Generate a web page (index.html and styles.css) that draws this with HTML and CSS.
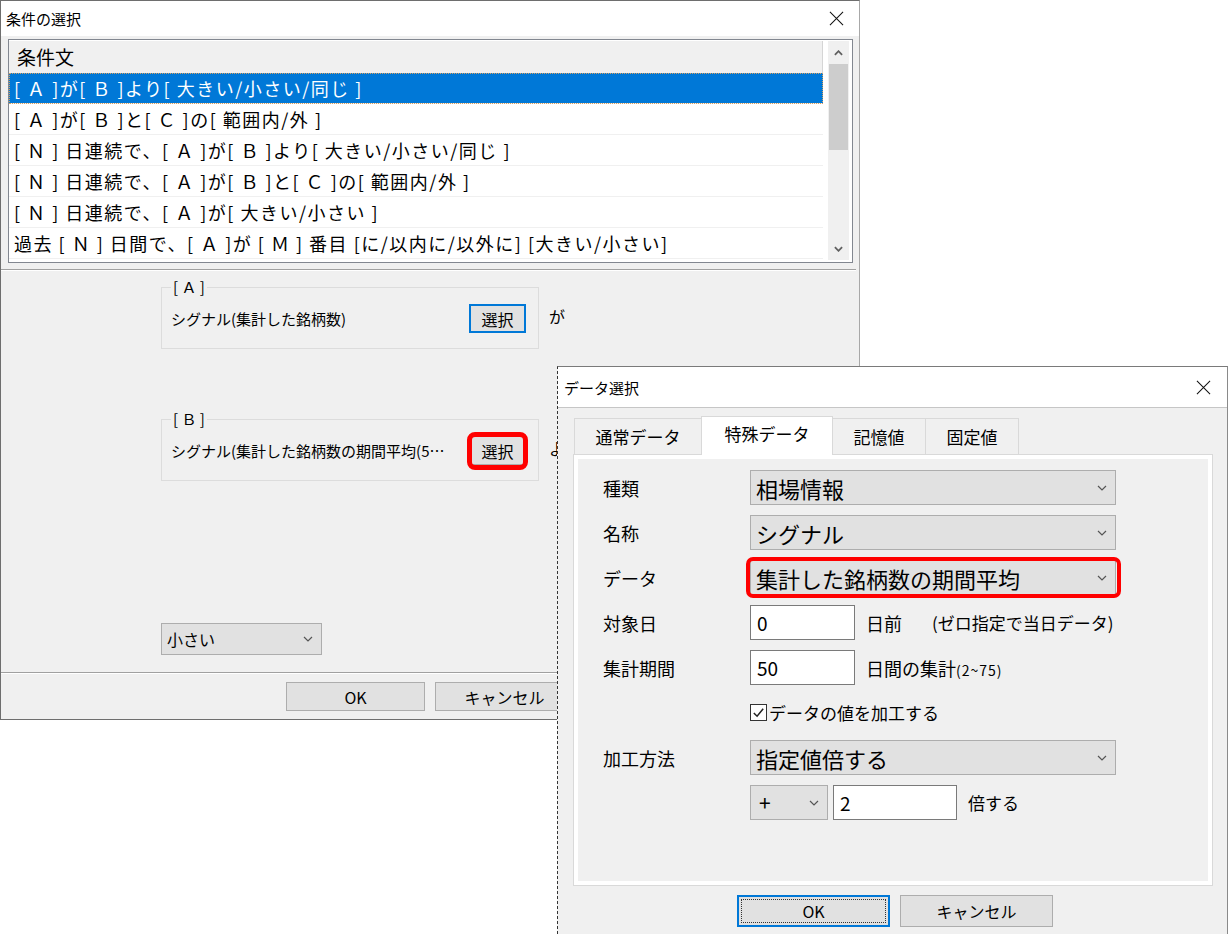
FILE: index.html
```html
<!DOCTYPE html>
<html lang="ja">
<head>
<meta charset="utf-8">
<title>条件の選択</title>
<link rel="stylesheet" href="styles.css">
</head>
<body>
<section class="win win1">
  <header class="tbar tbar1">
    <span class="ttl">条件の選択</span>
    <svg class="close" viewBox="0 0 16 16"><path d="M1 1L15 15M15 1L1 15"/></svg>
  </header>
  <div class="list">
    <div class="list-main">
      <div class="list-head">条件文</div>
      <div class="row sel">[ Ａ ]が[ Ｂ ]より[ 大きい/小さい/同じ ]</div>
      <div class="row">[ Ａ ]が[ Ｂ ]と[ Ｃ ]の[ 範囲内/外 ]</div>
      <div class="row">[ Ｎ ] 日連続で、[ Ａ ]が[ Ｂ ]より[ 大きい/小さい/同じ ]</div>
      <div class="row">[ Ｎ ] 日連続で、[ Ａ ]が[ Ｂ ]と[ Ｃ ]の[ 範囲内/外 ]</div>
      <div class="row">[ Ｎ ] 日連続で、[ Ａ ]が[ 大きい/小さい ]</div>
      <div class="row">過去 [ Ｎ ] 日間で、[ Ａ ]が [ Ｍ ] 番目 [に/以内に/以外に] [大きい/小さい]</div>
    </div>
    <div class="vscroll">
      <div class="sb-btn"><svg viewBox="0 0 10 6"><path d="M1 5L5 1L9 5"/></svg></div>
      <div class="sb-track"><div class="sb-thumb"></div></div>
      <div class="sb-btn"><svg viewBox="0 0 10 6"><path d="M1 1L5 5L9 1"/></svg></div>
    </div>
  </div>
  <div class="sep sep-top"></div>
  <div class="params">
    <div class="grp-row grp-a">
      <fieldset class="grp">
        <legend>[ Ａ ]</legend>
        <div class="grp-in">
          <span class="grp-text">シグナル(集計した銘柄数)</span>
          <button class="btn pick focus">選択</button>
        </div>
      </fieldset>
      <span class="conj">が</span>
    </div>
    <div class="grp-row grp-b">
      <fieldset class="grp">
        <legend>[ Ｂ ]</legend>
        <div class="grp-in">
          <span class="grp-text">シグナル(集計した銘柄数の期間平均(5…</span>
          <span class="mark-wrap"><button class="btn pick">選択</button><span class="ring ring-btn"></span></span>
        </div>
      </fieldset>
      <span class="conj">より</span>
    </div>
    <div class="dd dd-small"><span class="dd-val">小さい</span><svg class="chev" viewBox="0 0 10 6"><path d="M1 1L5 5L9 1"/></svg></div>
  </div>
  <div class="sep sep-bot"></div>
  <div class="btns1">
    <button class="btn b1">OK</button>
    <button class="btn b1">キャンセル</button>
  </div>
</section>

<section class="win win2">
  <header class="tbar tbar2">
    <span class="ttl">データ選択</span>
    <svg class="close" viewBox="0 0 16 16"><path d="M1 1L15 15M15 1L1 15"/></svg>
  </header>
  <div class="tabs">
    <div class="tab t1">通常データ</div>
    <div class="tab t2 on">特殊データ</div>
    <div class="tab t3">記憶値</div>
    <div class="tab t4">固定値</div>
  </div>
  <div class="panel">
    <div class="panel-in">
      <div class="frow">
        <span class="lbl">種類</span>
        <div class="dd dd-big"><span class="dd-val">相場情報</span><svg class="chev" viewBox="0 0 10 6"><path d="M1 1L5 5L9 1"/></svg></div>
      </div>
      <div class="frow">
        <span class="lbl">名称</span>
        <div class="dd dd-big"><span class="dd-val">シグナル</span><svg class="chev" viewBox="0 0 10 6"><path d="M1 1L5 5L9 1"/></svg></div>
      </div>
      <div class="frow">
        <span class="lbl">データ</span>
        <div class="dd dd-big"><span class="dd-val">集計した銘柄数の期間平均</span><svg class="chev" viewBox="0 0 10 6"><path d="M1 1L5 5L9 1"/></svg><span class="ring ring-dd"></span></div>
      </div>
      <div class="frow">
        <span class="lbl">対象日</span>
        <div class="ctl">
          <div class="inp inp-num">0</div>
          <span class="unit">日前</span>
          <span class="note">(ゼロ指定で当日データ)</span>
        </div>
      </div>
      <div class="frow">
        <span class="lbl">集計期間</span>
        <div class="ctl">
          <div class="inp inp-num">50</div>
          <span class="unit">日間の集計<small class="rng">(2~75)</small></span>
        </div>
      </div>
      <div class="frow">
        <span class="lbl"></span>
        <label class="chk">
          <span class="box"><svg viewBox="0 0 16 16"><path d="M3 8.5L6.5 12L13 4"/></svg></span>
          <span class="chk-text">データの値を加工する</span>
        </label>
      </div>
      <div class="frow">
        <span class="lbl">加工方法</span>
        <div class="dd dd-big"><span class="dd-val">指定値倍する</span><svg class="chev" viewBox="0 0 10 6"><path d="M1 1L5 5L9 1"/></svg></div>
      </div>
      <div class="frow">
        <span class="lbl"></span>
        <div class="ctl">
          <div class="dd dd-op"><span class="dd-val">+</span><svg class="chev" viewBox="0 0 10 6"><path d="M1 1L5 5L9 1"/></svg></div>
          <div class="inp inp-mul">2</div>
          <span class="unit unit-mul">倍する</span>
        </div>
      </div>
    </div>
  </div>
  <div class="btns2">
    <button class="btn b2 default">OK</button>
    <button class="btn b2">キャンセル</button>
  </div>
</section>
</body>
</html>
```

FILE: styles.css
```css
* { box-sizing: border-box; }
html, body { margin: 0; padding: 0; }
body {
  width: 1228px;
  height: 934px;
  background: #fff;
  font-family: "Noto Sans CJK JP", "Noto Sans", sans-serif;
  color: #000;
  overflow: hidden;
  position: relative;
}

/* ---------- windows ---------- */
.win {
  position: absolute;
  display: flex;
  flex-direction: column;
  background: #f0f0f0;
}
.win1 {
  left: 0;
  top: 0;
  width: 860px;
  height: 720px;
  border: 1px solid #6e6e6e;
  border-right-color: #a8a8a8;
}
.win2 {
  left: 557px;
  top: 366px;
  width: 671px;
  height: 568px;
  border-top: 1px solid #7a7a7a;
  border-left: 1px dashed #333;
  border-right: 1px solid #8a8a8a;
}

.tbar {
  flex: none;
  background: #fff;
  display: flex;
  align-items: center;
  justify-content: space-between;
}
.tbar1 { height: 35px; padding: 0 15px 0 5px; }
.tbar2 { height: 41px; padding: 0 16px 0 6px; border-bottom: 1px solid #c6c6c6; }
.ttl { font-size: 15px; line-height: 1; }
.close {
  width: 15px;
  height: 15px;
  fill: none;
  stroke: #111;
  stroke-width: 1.1;
}

/* ---------- list ---------- */
.list {
  flex: none;
  margin: 3px 6px 0 7px;
  height: 224px;
  border: 1px solid #828790;
  background: #fff;
  display: flex;
}
.list-main { width: 814px; padding-top: 1px; }
.list-head {
  height: 32px;
  background: #f0f0f0;
  border-right: 1px solid #d5d5d5;
  font-size: 19px;
  line-height: 32px;
  padding-left: 8px;
}
.row {
  height: 31px;
  font-size: 18px;
  line-height: 30px;
  padding-left: 5px;
  letter-spacing: 1.5px;
  border-bottom: 1px solid #f0f0f0;
  white-space: nowrap;
}
.row.sel {
  background: #0078d7;
  color: #fff;
  outline: 1px dotted #d9a05f;
  outline-offset: -1px;
}
.vscroll {
  width: 21px;
  margin: 1px 0 2px 5px;
  background: #f0f0f0;
  display: flex;
  flex-direction: column;
}
.sb-btn {
  height: 23px;
  display: flex;
  align-items: center;
  justify-content: center;
}
.sb-btn svg {
  width: 9px;
  height: 6px;
  fill: none;
  stroke: #606060;
  stroke-width: 2;
}
.sb-track { flex: 1; }
.sb-thumb { height: 86px; margin: 0 1px; background: #cdcdcd; }

/* ---------- separators ---------- */
.sep {
  flex: none;
  height: 2px;
  border-top: 1px solid #a0a0a0;
  border-bottom: 1px solid #fff;
}
.sep-top { margin: 6px 3px 0 0; }
.sep-bot { margin: 17px 0 0 0; }

/* ---------- groups ---------- */
.params {
  flex: none;
  padding-left: 160px;
  display: flex;
  flex-direction: column;
  align-items: flex-start;
}
.grp-row { display: flex; align-items: center; gap: 10px; }
.grp-a { margin-top: 7px; }
.grp-b { margin-top: 61px; }
.grp {
  width: 378px;
  margin: 0;
  min-width: 0;
  border: 1px solid #dcdcdc;
  padding: 8px 12px 15px 9px;
}
.grp legend {
  font-size: 15px;
  line-height: 18px;
  padding: 0 2px;
  margin-left: 0;
}
.grp-in {
  display: flex;
  align-items: center;
  justify-content: space-between;
}
.grp-text { font-size: 15px; line-height: 1; white-space: nowrap; }
.conj { font-size: 16px; margin-top: 4px; white-space: nowrap; }

.btn {
  font-family: inherit;
  color: #000;
  background: #e1e1e1;
  border: 1px solid #adadad;
  padding: 0;
  margin: 0;
}
.pick {
  width: 57px;
  height: 29px;
  font-size: 16px;
  line-height: 1;
}
.pick.focus { border: 2px solid #0078d7; }

.mark-wrap { position: relative; display: inline-flex; }
.ring {
  position: absolute;
  border: 5px solid #ff0000;
  border-radius: 8px;
  pointer-events: none;
}
.ring-btn { left: -2px; right: -2px; top: -4px; bottom: -5px; }
.ring-dd { left: -5px; right: -6px; top: -4px; bottom: -4px; border-width: 4px; border-radius: 7px; }

/* ---------- dropdowns ---------- */
.dd {
  position: relative;
  display: flex;
  align-items: center;
  justify-content: space-between;
  background: #e1e1e1;
  border: 1px solid #adadad;
}
.dd-val { white-space: nowrap; line-height: 1; }
.chev {
  width: 10px;
  height: 6px;
  fill: none;
  stroke: #555;
  stroke-width: 1.2;
  flex: none;
}
.dd-small {
  margin-top: 142px;
  width: 161px;
  height: 32px;
  padding: 0 8px 0 5px;
  font-size: 16px;
}
.dd-big {
  width: 366px;
  height: 35px;
  padding: 0 8px 0 5px;
  font-size: 22px;
}
.dd-op {
  width: 78px;
  height: 35px;
  padding: 0 8px 0 8px;
  font-size: 21px;
}

.btns1 {
  flex: none;
  display: flex;
  gap: 10px;
  margin: 8px 0 0 285px;
}
.b1 { width: 139px; height: 29px; font-size: 16px; flex: none; }

/* ---------- tabs ---------- */
.tabs {
  flex: none;
  display: flex;
  align-items: flex-end;
  height: 38px;
  margin: 8px 0 0 16px;
}
.tab {
  height: 36px;
  border: 1px solid #d9d9d9;
  border-bottom: none;
  background: #f0f0f0;
  font-size: 17px;
  display: flex;
  align-items: center;
  justify-content: center;
  margin-left: -1px;
}
.tab.t1 { width: 128px; margin-left: 0; }
.tab.t2 { width: 132px; }
.tab.t3 { width: 94px; }
.tab.t4 { width: 94px; }
.tab.on {
  height: 39px;
  background: #fff;
  position: relative;
  z-index: 1;
  margin-bottom: -1px;
  padding-bottom: 6px;
}

.panel {
  flex: none;
  margin-left: 15px;
  width: 640px;
  height: 432px;
  border: 1px solid #d9d9d9;
  background: #fff;
  padding: 4px;
}
.panel-in {
  height: 100%;
  background: #f0f0f0;
  padding: 6px 0 0 25px;
}
.frow {
  height: 45px;
  display: flex;
  align-items: center;
}
.lbl {
  width: 147px;
  flex: none;
  font-size: 18px;
  line-height: 1;
}
.ctl { display: flex; align-items: center; }
.inp {
  height: 35px;
  background: #fff;
  border: 1px solid #7a7a7a;
  font-size: 19px;
  display: flex;
  align-items: center;
  padding-left: 6px;
}
.inp-num { width: 105px; }
.unit { font-size: 18px; margin-left: 11px; white-space: nowrap; }
.rng { font-size: 14px; letter-spacing: 1px; }
.note { font-size: 17px; margin-left: 30px; white-space: nowrap; }
.inp-mul { width: 124px; margin-left: 5px; }
.unit-mul { margin-left: 11px; font-size: 17px; }

.chk { display: flex; align-items: center; }
.box {
  width: 17px;
  height: 17px;
  border: 1px solid #333;
  background: #fff;
  display: flex;
}
.box svg {
  width: 15px;
  height: 15px;
  fill: none;
  stroke: #222;
  stroke-width: 1.6;
}
.chk-text { font-size: 17px; margin-left: 2px; }

.btns2 {
  flex: none;
  display: flex;
  gap: 10px;
  margin: 9px 0 0 179px;
}
.b2 { width: 153px; height: 32px; font-size: 16px; flex: none; }
.b2.default {
  border: 2px solid #0078d7;
  outline: 1px dotted #333;
  outline-offset: -5px;
}
```
